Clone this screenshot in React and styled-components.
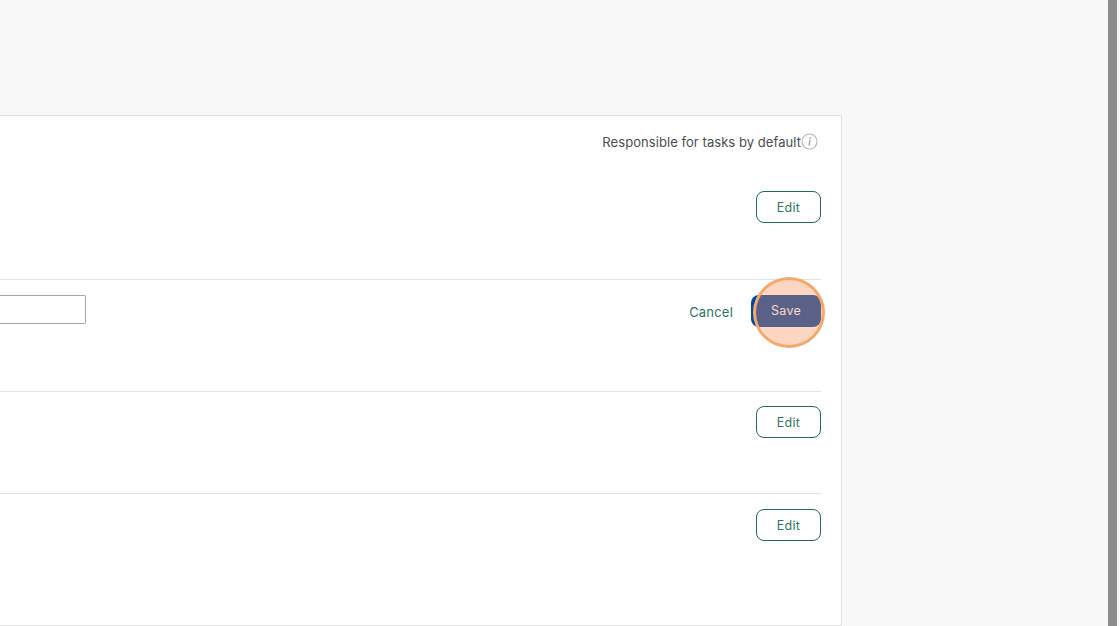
import React from 'react';
import styled, { createGlobalStyle } from 'styled-components';

const GlobalStyle = createGlobalStyle`
  html, body {
    margin: 0;
    padding: 0;
    height: 100%;
    overflow: hidden;
    background: #f8f8f8;
    font-family: 'Inter', 'Liberation Sans', sans-serif;
  }
`;

const InfoIcon = () => (
  <svg width="17" height="17" viewBox="0 0 17 17" fill="none">
    <circle cx="8.5" cy="8.5" r="7.5" stroke="#b4b4b4" strokeWidth="1.1" />
    <path d="M8.9 7.4 8.2 12" stroke="#a8a8a8" strokeWidth="1.5" strokeLinecap="round" />
    <circle cx="9.2" cy="5.2" r="0.9" fill="#a8a8a8" />
  </svg>
);

const App = () => {
  return (
    <Page>
      <GlobalStyle />
      <Main>
        <Panel>
          <TopSection>
            <ColumnLabel>
              Responsible for tasks by default
              <InfoIcon />
            </ColumnLabel>
            <EditButton>Edit</EditButton>
          </TopSection>
          <EditingRow>
            <TextInput />
            <Actions>
              <CancelLink>Cancel</CancelLink>
              <SaveButton>
                Save
                <Highlight />
              </SaveButton>
            </Actions>
          </EditingRow>
          <Row $height={102}>
            <EditButton>Edit</EditButton>
          </Row>
          <Row $last>
            <EditButton>Edit</EditButton>
          </Row>
        </Panel>
      </Main>
      <Scrollbar />
    </Page>
  );
};

const Page = styled.div`
  display: flex;
  width: 1120px;
  height: 626px;
  overflow: hidden;
`;

const Main = styled.div`
  width: 1108px;
  padding-top: 115px;
  box-sizing: border-box;
`;

const Scrollbar = styled.div`
  width: 9px;
  height: 626px;
  background: #8c8c8c;
`;

const Panel = styled.div`
  width: 842px;
  height: 511px;
  box-sizing: border-box;
  padding-right: 20px;
  background: #fff;
  border: 1px solid #e0e0e0;
  border-left: none;
`;

const Section = styled.div`
  display: flex;
  flex-direction: column;
  align-items: flex-end;
  border-bottom: 1px solid #e2e2e2;
`;

const TopSection = styled(Section)`
  height: 164px;
  box-sizing: border-box;
  padding-top: 17px;
`;

const ColumnLabel = styled.div`
  display: flex;
  align-items: center;
  height: 17px;
  margin-bottom: 41px;
  margin-right: 3px;
  font-size: 13px;
  letter-spacing: 0.06px;
  color: #4a4f4d;
`;

const Row = styled(Section)`
  height: ${(p) => (p.$height ? `${p.$height}px` : 'auto')};
  box-sizing: border-box;
  padding-top: ${(p) => (p.$last ? '15px' : '14px')};
  border-bottom: ${(p) => (p.$last ? 'none' : '1px solid #e2e2e2')};
`;

const EditingRow = styled.div`
  display: flex;
  justify-content: space-between;
  align-items: flex-start;
  height: 112px;
  box-sizing: border-box;
  padding-top: 15px;
  border-bottom: 1px solid #e2e2e2;
`;

const TextInput = styled.div`
  width: 86px;
  height: 29px;
  box-sizing: border-box;
  background: #fff;
  border: 1px solid #a6a6a6;
  border-left: none;
  border-radius: 0 2px 2px 0;
`;

const Actions = styled.div`
  display: flex;
  align-items: center;
  gap: 18px;
`;

const CancelLink = styled.span`
  padding-top: 1px;
  font-size: 13px;
  letter-spacing: 0.2px;
  color: #2a7763;
`;

const EditButton = styled.button`
  width: 65px;
  height: 32px;
  padding: 0;
  background: #fff;
  border: 1px solid #23695a;
  border-radius: 8px;
  font-family: inherit;
  font-size: 12.5px;
  letter-spacing: 0.3px;
  color: #2f7766;
`;

const SaveButton = styled.button`
  position: relative;
  width: 70px;
  height: 32px;
  padding: 0 0 2px;
  background: #0048a5;
  border: none;
  border-radius: 8px;
  font-family: inherit;
  font-size: 12.5px;
  letter-spacing: 0.3px;
  color: #fff;
`;

const Highlight = styled.span`
  position: absolute;
  left: 2px;
  top: -18px;
  width: 72px;
  height: 71px;
  box-sizing: border-box;
  border: 3px solid #f5a86a;
  border-radius: 50%;
  background: rgba(250, 140, 90, 0.36);
`;

export default App;
